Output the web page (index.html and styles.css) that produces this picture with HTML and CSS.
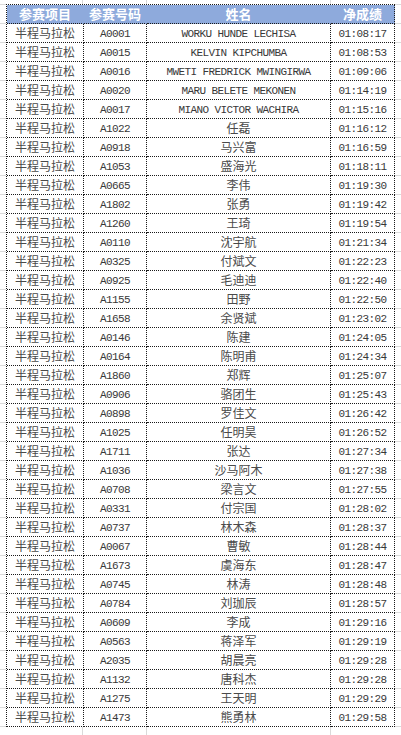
FILE: index.html
```html
<!DOCTYPE html>
<html lang="zh-CN">
<head>
<meta charset="utf-8">
<title>半程马拉松成绩</title>
<link rel="stylesheet" href="styles.css">
</head>
<body>
<div class="sheet">
  <div class="results">
    <div class="cell head">参赛项目</div><div class="cell head">参赛号码</div><div class="cell head">姓名</div><div class="cell head">净成绩</div>
    <div class="cell cn">半程马拉松</div><div class="cell mono">A0001</div><div class="cell mono">WORKU HUNDE LECHISA</div><div class="cell mono">01:08:17</div>
    <div class="cell cn">半程马拉松</div><div class="cell mono">A0015</div><div class="cell mono">KELVIN KIPCHUMBA</div><div class="cell mono">01:08:53</div>
    <div class="cell cn">半程马拉松</div><div class="cell mono">A0016</div><div class="cell mono">MWETI FREDRICK MWINGIRWA</div><div class="cell mono">01:09:06</div>
    <div class="cell cn">半程马拉松</div><div class="cell mono">A0020</div><div class="cell mono">MARU BELETE MEKONEN</div><div class="cell mono">01:14:19</div>
    <div class="cell cn">半程马拉松</div><div class="cell mono">A0017</div><div class="cell mono">MIANO VICTOR WACHIRA</div><div class="cell mono">01:15:16</div>
    <div class="cell cn">半程马拉松</div><div class="cell mono">A1022</div><div class="cell cn">任磊</div><div class="cell mono">01:16:12</div>
    <div class="cell cn">半程马拉松</div><div class="cell mono">A0918</div><div class="cell cn">马兴富</div><div class="cell mono">01:16:59</div>
    <div class="cell cn">半程马拉松</div><div class="cell mono">A1053</div><div class="cell cn">盛海光</div><div class="cell mono">01:18:11</div>
    <div class="cell cn">半程马拉松</div><div class="cell mono">A0665</div><div class="cell cn">李伟</div><div class="cell mono">01:19:30</div>
    <div class="cell cn">半程马拉松</div><div class="cell mono">A1802</div><div class="cell cn">张勇</div><div class="cell mono">01:19:42</div>
    <div class="cell cn">半程马拉松</div><div class="cell mono">A1260</div><div class="cell cn">王琦</div><div class="cell mono">01:19:54</div>
    <div class="cell cn">半程马拉松</div><div class="cell mono">A0110</div><div class="cell cn">沈宇航</div><div class="cell mono">01:21:34</div>
    <div class="cell cn">半程马拉松</div><div class="cell mono">A0325</div><div class="cell cn">付斌文</div><div class="cell mono">01:22:23</div>
    <div class="cell cn">半程马拉松</div><div class="cell mono">A0925</div><div class="cell cn">毛迪迪</div><div class="cell mono">01:22:40</div>
    <div class="cell cn">半程马拉松</div><div class="cell mono">A1155</div><div class="cell cn">田野</div><div class="cell mono">01:22:50</div>
    <div class="cell cn">半程马拉松</div><div class="cell mono">A1658</div><div class="cell cn">余贤斌</div><div class="cell mono">01:23:02</div>
    <div class="cell cn">半程马拉松</div><div class="cell mono">A0146</div><div class="cell cn">陈建</div><div class="cell mono">01:24:05</div>
    <div class="cell cn">半程马拉松</div><div class="cell mono">A0164</div><div class="cell cn">陈明甫</div><div class="cell mono">01:24:34</div>
    <div class="cell cn">半程马拉松</div><div class="cell mono">A1860</div><div class="cell cn">郑辉</div><div class="cell mono">01:25:07</div>
    <div class="cell cn">半程马拉松</div><div class="cell mono">A0906</div><div class="cell cn">骆团生</div><div class="cell mono">01:25:43</div>
    <div class="cell cn">半程马拉松</div><div class="cell mono">A0898</div><div class="cell cn">罗佳文</div><div class="cell mono">01:26:42</div>
    <div class="cell cn">半程马拉松</div><div class="cell mono">A1025</div><div class="cell cn">任明昊</div><div class="cell mono">01:26:52</div>
    <div class="cell cn">半程马拉松</div><div class="cell mono">A1711</div><div class="cell cn">张达</div><div class="cell mono">01:27:34</div>
    <div class="cell cn">半程马拉松</div><div class="cell mono">A1036</div><div class="cell cn">沙马阿木</div><div class="cell mono">01:27:38</div>
    <div class="cell cn">半程马拉松</div><div class="cell mono">A0708</div><div class="cell cn">梁言文</div><div class="cell mono">01:27:55</div>
    <div class="cell cn">半程马拉松</div><div class="cell mono">A0331</div><div class="cell cn">付宗国</div><div class="cell mono">01:28:02</div>
    <div class="cell cn">半程马拉松</div><div class="cell mono">A0737</div><div class="cell cn">林木森</div><div class="cell mono">01:28:37</div>
    <div class="cell cn">半程马拉松</div><div class="cell mono">A0067</div><div class="cell cn">曹敏</div><div class="cell mono">01:28:44</div>
    <div class="cell cn">半程马拉松</div><div class="cell mono">A1673</div><div class="cell cn">虞海东</div><div class="cell mono">01:28:47</div>
    <div class="cell cn">半程马拉松</div><div class="cell mono">A0745</div><div class="cell cn">林涛</div><div class="cell mono">01:28:48</div>
    <div class="cell cn">半程马拉松</div><div class="cell mono">A0784</div><div class="cell cn">刘珈辰</div><div class="cell mono">01:28:57</div>
    <div class="cell cn">半程马拉松</div><div class="cell mono">A0609</div><div class="cell cn">李成</div><div class="cell mono">01:29:16</div>
    <div class="cell cn">半程马拉松</div><div class="cell mono">A0563</div><div class="cell cn">蒋泽军</div><div class="cell mono">01:29:19</div>
    <div class="cell cn">半程马拉松</div><div class="cell mono">A2035</div><div class="cell cn">胡晨亮</div><div class="cell mono">01:29:28</div>
    <div class="cell cn">半程马拉松</div><div class="cell mono">A1132</div><div class="cell cn">唐科杰</div><div class="cell mono">01:29:28</div>
    <div class="cell cn">半程马拉松</div><div class="cell mono">A1275</div><div class="cell cn">王天明</div><div class="cell mono">01:29:29</div>
    <div class="cell cn">半程马拉松</div><div class="cell mono">A1473</div><div class="cell cn">熊勇林</div><div class="cell mono">01:29:58</div>
  </div>
</div>
</body>
</html>
```
FILE: styles.css
```css
html, body {
  margin: 0;
  padding: 0;
  background: #ffffff;
}

.sheet {
  width: 401px;
  height: 735px;
  overflow: hidden;
  padding: 4px 0 0 6px;
  box-sizing: border-box;
  background-color: #ffffff;
  background-image:
    linear-gradient(to right, transparent 82px, #dadada 82px 83px, transparent 83px),
    linear-gradient(to right, transparent 146px, #dadada 146px 147px, transparent 147px),
    linear-gradient(to right, transparent 330px, #dadada 330px 331px, transparent 331px),
    repeating-linear-gradient(to bottom, transparent 0 18px, #dadada 18px 19px);
  background-size: 100% 100%, 100% 100%, 100% 100%, 100% 19px;
  background-position: 0 0, 0 0, 0 0, 0 5px;
}

.results {
  display: grid;
  grid-template-columns: 77px 63px 184px 64px;
  grid-auto-rows: 19px;
  width: max-content;
  border-left: 1px dotted #1a1a1a;
  border-top: 1px dotted #1a1a1a;
  background: #ffffff;
}

.cell {
  border-right: 1px dotted #1a1a1a;
  border-bottom: 1px dotted #1a1a1a;
  display: flex;
  align-items: center;
  justify-content: center;
  white-space: nowrap;
  overflow: hidden;
  color: #474747;
  line-height: 18px;
}

.head {
  background: #8eaadc;
  color: #ffffff;
  font-family: "Noto Sans CJK SC", sans-serif;
  font-weight: bold;
  font-size: 13px;
  border-right-color: #8eaadc;
}

.head:nth-child(4) {
  border-right-color: #1a1a1a;
}

.cn {
  font-family: "Noto Sans CJK SC", sans-serif;
  font-size: 12px;
  color: #4a4a4a;
}

.mono {
  font-family: "Liberation Mono", "Noto Sans CJK SC", monospace;
  font-size: 11px;
  letter-spacing: -0.6px;
  color: #383838;
  padding-top: 1px;
  box-sizing: border-box;
}
```
